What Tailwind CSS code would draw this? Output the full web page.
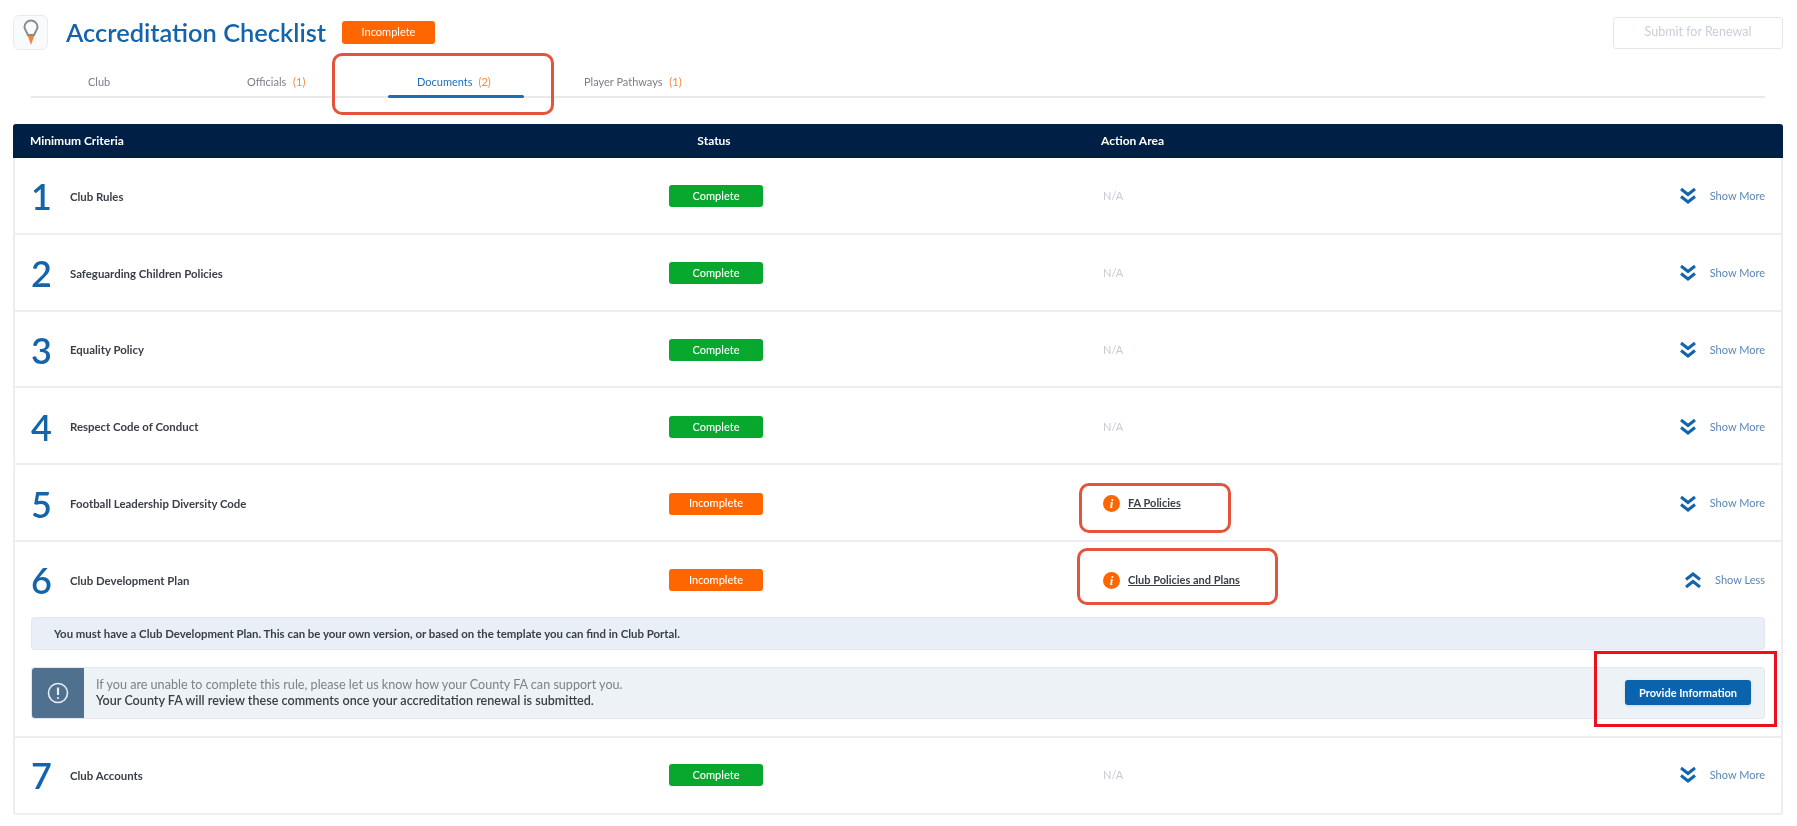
<!DOCTYPE html>
<html lang="en">
<head>
    <meta charset="UTF-8">
    <meta name="viewport" content="width=device-width, initial-scale=1.0">
    <title>Accreditation Checklist</title>
    <script src="https://cdn.jsdelivr.net/npm/@tailwindcss/browser@4"></script>
</head>
<body class="bg-white font-['Lato','Noto_Sans',sans-serif] text-[#3a3f47] overflow-hidden">
<div class="relative w-[1797px] h-[826px] pt-[15px]">
    <div class="blur-[0.5px]">
        <!-- top bar -->
        <div class="flex items-center h-[35px] pl-[13px] pr-[14px]">
            <div class="w-[35px] h-[35px] rounded-md border border-[#e6ebf2] bg-[#f8fafc] flex items-center justify-center">
                <svg width="16" height="27" viewBox="0 0 16 27" fill="none">
                    <path d="M8 1.500a6.500 6.500 0 0 0-6.500 6.500c0 3 2.400 4.600 3.400 8h6.200c1-3.400 3.400-5 3.400-8A6.500 6.500 0 0 0 8 1.500z" stroke="#8b8b8b" stroke-width="2"/>
                    <path d="M4.800 17h6.400l-3.200 9z" fill="#f4843c"/>
                </svg>
            </div>
            <h1 class="ml-[18px] text-[25.400px] leading-none font-semibold text-[#1464ac] w-[276px] whitespace-nowrap">Accreditation Checklist</h1>
            <span class="w-[93px] h-[23px] rounded-[3px] bg-[#ff6600] text-white text-[11px] flex items-center justify-center">Incomplete</span>
            <button class="ml-auto w-[170px] h-[32px] rounded-[3px] border border-[#e3e6ee] text-[#c9ced9] text-[12.500px]">Submit for Renewal</button>
        </div>

        <!-- tabs -->
        <div class="relative mt-[14px] ml-[31px] w-[1734px] h-[34px] border-b-2 border-[#e9e9ec] text-[11px] text-[#7a7f87]">
            <div class="flex items-center h-[32px] pt-[4px]">
                <span class="w-[216px] pl-[57px]">Club</span>
                <span class="w-[141px]">Officials <span class="text-[#f58a3c] ml-1">(1)</span></span>
                <span class="w-[196px] pl-[29px] text-[#1d6fb8] flex items-center">Documents <span class="text-[#f58a3c] ml-1.5">(2)</span></span>
                <span>Player Pathways <span class="text-[#f58a3c] ml-1">(1)</span></span>
            </div>
            <div class="absolute left-[357px] -bottom-[2px] w-[136px] h-[3px] rounded-full bg-[#1b6db5]"></div>
        </div>

        <!-- table -->
        <div class="mt-[26px] ml-[13px] w-[1770px] rounded-[3px] border-x-2 border-b-2 border-[#eceef3]">
            <div class="grid grid-cols-[55px_599px_94px_1fr] items-center h-[34px] -mx-[2px] rounded-t-[3px] bg-[#001f45] text-white text-[12px] font-bold">
                <span class="pl-[17px] col-span-2">Minimum Criteria</span>
                <span class="text-center">Status</span>
                <span class="pl-[340px]">Action Area</span>
            </div>

            <div class="grid grid-cols-[55px_599px_94px_1fr_auto] items-center h-[76.800px] pt-[2px] border-b-2 border-[#eceef3] pr-[16px]">
                <span class="pl-[16px] text-[36px] font-semibold leading-none text-[#1464ac]">1</span>
                <span class="text-[11.400px] font-bold">Club Rules</span>
                <span class="h-[22px] rounded-[3px] bg-[#08a82f] text-white text-[11px] font-medium flex items-center justify-center">Complete</span>
                <span class="pl-[340px] text-[11px] text-[#c6cad3]">N/A</span>
                <span class="flex items-center justify-end gap-[13px] text-[11px] text-[#5b86b8]">
                    <svg width="18" height="18" viewBox="0 0 18 18" fill="none" stroke="#1464ac" stroke-width="3"><path d="M2 2l7 5.500L16 2M2 9.500L9 15l7-5.500"/></svg>
                    Show More
                </span>
            </div>

            <div class="grid grid-cols-[55px_599px_94px_1fr_auto] items-center h-[76.800px] pt-[2px] border-b-2 border-[#eceef3] pr-[16px]">
                <span class="pl-[16px] text-[36px] font-semibold leading-none text-[#1464ac]">2</span>
                <span class="text-[11.400px] font-bold">Safeguarding Children Policies</span>
                <span class="h-[22px] rounded-[3px] bg-[#08a82f] text-white text-[11px] font-medium flex items-center justify-center">Complete</span>
                <span class="pl-[340px] text-[11px] text-[#c6cad3]">N/A</span>
                <span class="flex items-center justify-end gap-[13px] text-[11px] text-[#5b86b8]">
                    <svg width="18" height="18" viewBox="0 0 18 18" fill="none" stroke="#1464ac" stroke-width="3"><path d="M2 2l7 5.500L16 2M2 9.500L9 15l7-5.500"/></svg>
                    Show More
                </span>
            </div>

            <div class="grid grid-cols-[55px_599px_94px_1fr_auto] items-center h-[76.800px] pt-[2px] border-b-2 border-[#eceef3] pr-[16px]">
                <span class="pl-[16px] text-[36px] font-semibold leading-none text-[#1464ac]">3</span>
                <span class="text-[11.400px] font-bold">Equality Policy</span>
                <span class="h-[22px] rounded-[3px] bg-[#08a82f] text-white text-[11px] font-medium flex items-center justify-center">Complete</span>
                <span class="pl-[340px] text-[11px] text-[#c6cad3]">N/A</span>
                <span class="flex items-center justify-end gap-[13px] text-[11px] text-[#5b86b8]">
                    <svg width="18" height="18" viewBox="0 0 18 18" fill="none" stroke="#1464ac" stroke-width="3"><path d="M2 2l7 5.500L16 2M2 9.500L9 15l7-5.500"/></svg>
                    Show More
                </span>
            </div>

            <div class="grid grid-cols-[55px_599px_94px_1fr_auto] items-center h-[76.800px] pt-[2px] border-b-2 border-[#eceef3] pr-[16px]">
                <span class="pl-[16px] text-[36px] font-semibold leading-none text-[#1464ac]">4</span>
                <span class="text-[11.400px] font-bold">Respect Code of Conduct</span>
                <span class="h-[22px] rounded-[3px] bg-[#08a82f] text-white text-[11px] font-medium flex items-center justify-center">Complete</span>
                <span class="pl-[340px] text-[11px] text-[#c6cad3]">N/A</span>
                <span class="flex items-center justify-end gap-[13px] text-[11px] text-[#5b86b8]">
                    <svg width="18" height="18" viewBox="0 0 18 18" fill="none" stroke="#1464ac" stroke-width="3"><path d="M2 2l7 5.500L16 2M2 9.500L9 15l7-5.500"/></svg>
                    Show More
                </span>
            </div>

            <div class="grid grid-cols-[55px_599px_94px_1fr_auto] items-center h-[76.800px] pt-[2px] border-b-2 border-[#eceef3] pr-[16px]">
                <span class="pl-[16px] text-[36px] font-semibold leading-none text-[#1464ac]">5</span>
                <span class="text-[11.400px] font-bold">Football Leadership Diversity Code</span>
                <span class="h-[22px] rounded-[3px] bg-[#ff6600] text-white text-[11px] font-medium flex items-center justify-center">Incomplete</span>
                <span class="ml-[339px] flex items-center gap-[8px] text-[11px] font-bold pl-[1px]">
                    <span class="w-[17px] h-[17px] rounded-full bg-[#ff6600] text-white text-[13px] italic font-bold font-['Liberation_Serif',serif] flex items-center justify-center">i</span>
                    <span class="underline">FA Policies</span>
                </span>
                <span class="flex items-center justify-end gap-[13px] text-[11px] text-[#5b86b8]">
                    <svg width="18" height="18" viewBox="0 0 18 18" fill="none" stroke="#1464ac" stroke-width="3"><path d="M2 2l7 5.500L16 2M2 9.500L9 15l7-5.500"/></svg>
                    Show More
                </span>
            </div>

            <!-- expanded row -->
            <div class="border-b-2 border-[#eceef3] h-[196px] px-[16px]">
                <div class="grid grid-cols-[39px_599px_94px_1fr_auto] items-center h-[75px] pt-[2px]">
                    <span class="text-[36px] font-semibold leading-none text-[#1464ac]">6</span>
                    <span class="text-[11.400px] font-bold">Club Development Plan</span>
                    <span class="h-[22px] rounded-[3px] bg-[#ff6600] text-white text-[11px] font-medium flex items-center justify-center">Incomplete</span>
                    <span class="ml-[339px] flex items-center gap-[8px] text-[11px] font-bold pl-[1px]">
                        <span class="w-[17px] h-[17px] rounded-full bg-[#ff6600] text-white text-[13px] italic font-bold font-['Liberation_Serif',serif] flex items-center justify-center">i</span>
                        <span class="underline">Club Policies and Plans</span>
                    </span>
                    <span class="flex items-center justify-end gap-[13px] text-[11px] text-[#5b86b8]">
                        <svg width="18" height="18" viewBox="0 0 18 18" fill="none" stroke="#1464ac" stroke-width="3"><path d="M2 8.500L9 3l7 5.500M2 16l7-5.500L16 16"/></svg>
                        Show Less
                    </span>
                </div>
                <div class="h-[33px] rounded-[3px] bg-[#e9eff6] border border-[#e3e8ef] flex items-center pl-[22px] text-[11.400px] font-bold">You must have a Club Development Plan. This can be your own version, or based on the template you can find in Club Portal.</div>
                <div class="mt-[17px] h-[52px] rounded-[3px] bg-[#edf2f7] border border-[#e3e8ef] flex items-center">
                    <div class="w-[52px] h-full rounded-l-[3px] bg-[#50708f] flex items-center justify-center">
                        <svg width="24" height="24" viewBox="0 0 24 24" fill="none" stroke="#e8eef4" stroke-width="1.600"><circle cx="12" cy="12" r="9.500"/><path d="M12 6.500v7.500" stroke-width="2.200"/><circle cx="12" cy="17" r="1.100" fill="#e8eef4" stroke="none"/></svg>
                    </div>
                    <div class="ml-[12px] text-[12.600px] leading-[16px]">
                        <p class="text-[#7c8288]">If you are unable to complete this rule, please let us know how your County FA can support you.</p>
                        <p class="font-semibold">Your County FA will review these comments once your accreditation renewal is submitted.</p>
                    </div>
                    <button class="ml-auto mr-[13px] w-[126px] h-[25px] rounded-[3px] bg-[#0b62ad] shadow-sm text-white text-[11px] font-bold">Provide Information</button>
                </div>
            </div>

            <div class="grid grid-cols-[55px_599px_94px_1fr_auto] items-center h-[75px] pr-[16px]">
                <span class="pl-[16px] text-[36px] font-semibold leading-none text-[#1464ac]">7</span>
                <span class="text-[11.400px] font-bold">Club Accounts</span>
                <span class="h-[22px] rounded-[3px] bg-[#08a82f] text-white text-[11px] font-medium flex items-center justify-center">Complete</span>
                <span class="pl-[340px] text-[11px] text-[#c6cad3]">N/A</span>
                <span class="flex items-center justify-end gap-[13px] text-[11px] text-[#5b86b8]">
                    <svg width="18" height="18" viewBox="0 0 18 18" fill="none" stroke="#1464ac" stroke-width="3"><path d="M2 2l7 5.500L16 2M2 9.500L9 15l7-5.500"/></svg>
                    Show More
                </span>
            </div>
        </div>
    </div>

    <!-- review annotations drawn over the screenshot -->
    <div class="absolute left-[332px] top-[53px] w-[222px] h-[62px] rounded-[10px] border-[3px] border-[#e5533d]"></div>
    <div class="absolute left-[1079px] top-[483px] w-[152px] h-[50px] rounded-[10px] border-[3px] border-[#e5533d]"></div>
    <div class="absolute left-[1077px] top-[548px] w-[201px] h-[57px] rounded-[10px] border-[3px] border-[#e5533d]"></div>
    <div class="absolute left-[1594px] top-[651px] w-[183px] h-[76px] border-[3px] border-[#ee0f1c]"></div>
</div>
</body>
</html>
